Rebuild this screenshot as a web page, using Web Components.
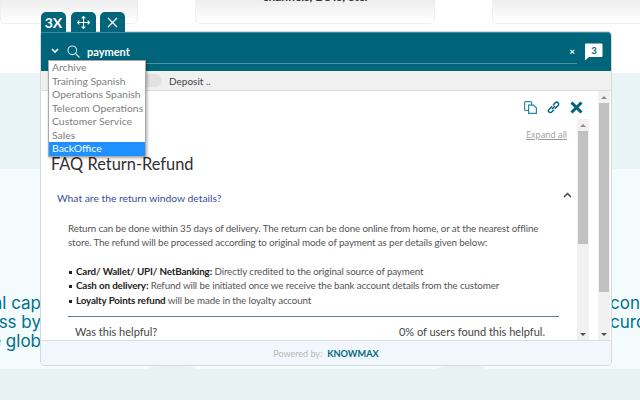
<!DOCTYPE html>
<html>
<head>
<meta charset="utf-8">
<style>
  html, body { margin: 0; height: 400px; overflow: hidden; background: #fff; }
  body { font-family: "Lato", "Noto Sans", sans-serif; }
</style>
</head>
<body>
<bg-page></bg-page>
<kb-widget></kb-widget>

<script>
// fundo do site, atras do widget
class BgPage extends HTMLElement {
  constructor() {
    super();
    this.attachShadow({ mode: "open" });
    this.shadowRoot.innerHTML = `
      <style>
        :host { display: flex; flex-direction: column; width: 640px; height: 400px; overflow: hidden; }
        .cards { height: 73px; flex: none; display: grid; grid-template-columns: 138px 240px 147px; justify-content: start; column-gap: 57px; background: #fff; }
        .card { height: 24px; border: 1px solid #efefef; border-top: 0; border-radius: 0 0 5px 5px; background: linear-gradient(#eeeeee, #fff); font: 700 12px "Lato", sans-serif; color: #333; text-align: center; overflow: hidden; box-sizing: border-box; }
        .card span { display: block; margin-top: -10px; line-height: 14px; }
        .card.last { width: 200px; }
        .band { height: 96px; flex: none; background: #e9f4f6; }
        .mid { height: 200px; flex: none; background: #f3fbfd; display: flex; justify-content: space-between; padding-top: 125px; box-sizing: border-box; color: #00708a; font: 400 17px/19px "Inter", sans-serif; }
        .mid div { width: 41px; overflow: hidden; white-space: nowrap; }
        .mid .l { text-align: right; direction: rtl; }
        .mid .r { width: 30px; }
        .foot { flex: 1; background: #e8f2f2; position: relative; }
        .foot i { position: absolute; top: -4px; width: 48px; height: 4px; background: #e8f2f2; border-radius: 24px 24px 0 0 / 4px 4px 0 0; }
      </style>
      <div class="cards">
        <div class="card"></div>
        <div class="card"><span>channels, DSTs, etc.</span></div>
        <div class="card last"></div>
      </div>
      <div class="band"></div>
      <div class="mid">
        <div class="l"><bdo dir="ltr">al cap</bdo><br><bdo dir="ltr">ss by</bdo><br><bdo dir="ltr">e glob</bdo></div>
        <div class="r">cont<br>curo</div>
      </div>
      <div class="foot"><i style="left:148px"></i><i style="left:437px"></i></div>`;
  }
}

// barra de rolagem desenhada, igual a do windows
class FakeScroll extends HTMLElement {
  constructor() {
    super();
    this.attachShadow({ mode: "open" });
    this.shadowRoot.innerHTML = `
      <style>
        :host { display: flex; flex-direction: column; width: 12px; background: #f1f1f1; align-items: stretch; }
        .btn { height: 12px; flex: none; display: flex; align-items: center; justify-content: center; }
        .up { width: 0; height: 0; border: 3px solid transparent; border-top: 0; border-bottom: 3px solid #8c8c8c; }
        .down { width: 0; height: 0; border: 3px solid transparent; border-bottom: 0; border-top: 3px solid #505050; }
        .track { flex: 1; padding: 0 1px; display: flex; align-items: flex-start; }
        .thumb { flex: 1; background: #c1c1c1; height: var(--thumb, 100px); }
      </style>
      <div class="btn"><div class="up"></div></div>
      <div class="track"><div class="thumb"></div></div>
      <div class="btn"><div class="down"></div></div>`;
  }
}

class KbTab extends HTMLElement {
  constructor() {
    super();
    this.attachShadow({ mode: "open" });
    this.shadowRoot.innerHTML = `
      <style>
        :host { display: flex; width: 25px; height: 20px; align-items: center; justify-content: center; background: #00647a; border-radius: 5px 5px 0 0; color: #fff; font: 700 14px "Lato", sans-serif; }
      </style>
      <slot></slot>`;
  }
}

class KbDropdown extends HTMLElement {
  constructor() {
    super();
    this.attachShadow({ mode: "open" });
    const items = ["Archive", "Training Spanish", "Operations Spanish", "Telecom Operations", "Customer Service", "Sales", "BackOffice"];
    this.shadowRoot.innerHTML = `
      <style>
        :host { display: block; position: absolute; left: 7px; top: 28px; width: 96px; background: #fff; border: 1px solid #a9a9a9; box-shadow: 1px 1px 3px rgba(0,0,0,.35); z-index: 5; font: 400 10.4px/13.5px "Lato", sans-serif; color: #808080; }
        div { padding-left: 3px; height: 13.5px; white-space: nowrap; }
        div.sel { background: #1e90ff; color: #fff; }
      </style>
      ${items.map((t) => `<div class="${t === "BackOffice" ? "sel" : ""}">${t}</div>`).join("")}`;
  }
}

class KbFaq extends HTMLElement {
  constructor() {
    super();
    this.attachShadow({ mode: "open" });
    this.shadowRoot.innerHTML = `
      <style>
        :host { display: flex; flex: 1; min-width: 0; height: 249px; overflow: hidden; background: #fff; font-family: "Lato", sans-serif; }
        .main { flex: 1; min-width: 0; display: flex; flex-direction: column; }
        .tools { height: 28px; flex: none; display: flex; justify-content: flex-end; align-items: flex-start; gap: 10px; padding: 10px 15px 0 0; box-sizing: border-box; }
        .tools svg { display: block; }
        .body { display: flex; flex: 1; min-height: 0; }
        .col { flex: 1; min-width: 0; padding-left: 10px; }
        .expand { text-align: right; font: 400 8.5px/12px "Open Sans", sans-serif; color: #9a9a9a; text-decoration: underline; padding: 10px 10px 0 0; }
        h1 { margin: 11px 0 0; font: 400 16.4px/24px "Lato", sans-serif; color: #2f2f2f; }
        .q { display: flex; justify-content: space-between; align-items: center; margin-top: 12px; height: 20px; padding: 0 5px 0 6px; font: 400 10.3px/20px "Lato", sans-serif; color: #34509c; }
        .q svg { margin-top: -6px; }
        .a { margin: 12.5px 0 0 17px; width: 492px; font-size: 9.8px; letter-spacing: -.13px; line-height: 14.4px; color: #555; }
        .a p { margin: 0 0 14.4px; }
        .a b { color: #222; font-weight: 700; }
        .a ul { margin: 0; padding: 0; list-style: none; }
        .a li::before { content: ""; display: inline-block; width: 3px; height: 3px; background: #222; margin: 0 4px 1px 1px; }
        .help { margin-top: 9px; width: 491px; margin-left: 17px; border-top: 1px solid #5f79b0; display: flex; justify-content: space-between; padding: 7px 14px 0 7px; box-sizing: border-box; font: 400 11px/16px "Lato", sans-serif; color: #444; }
        fake-scroll.in { --thumb: 113px; height: 221px; margin-right: 9px; }
        fake-scroll.out { --thumb: 189px; margin-right: 1px; }
      </style>
      <div class="main">
        <div class="tools">
          <svg width="13" height="13" viewBox="0 0 13 13" fill="none" stroke="#2a88a0" stroke-width="1.2"><path d="M4.5 9.5H1.6a1 1 0 0 1-1-1V1.6a1 1 0 0 1 1-1h5a1 1 0 0 1 1 1V4"/><path d="M4.6 4.2h5l2.8 2.6v5.6H4.6z"/></svg>
          <svg width="13" height="13" viewBox="0 0 13 13" fill="none" stroke="#00647a" stroke-width="1.4"><path d="M5 8l3-3M5.2 5.2L2 8.4a1.9 1.9 0 0 0 2.7 2.7L7 8.8"/><path d="M6 4.2l2.3-2.4a1.9 1.9 0 0 1 2.8 2.7L7.8 7.8"/></svg>
          <svg width="13" height="13" viewBox="0 0 13 13" fill="none" stroke="#00647a" stroke-width="3"><path d="M1.5 1.5l10 10M11.5 1.5l-10 10"/></svg>
        </div>
        <div class="body">
          <div class="col">
            <div class="expand">Expand all</div>
            <h1>FAQ Return-Refund</h1>
            <div class="q"><span>What are the return window details?</span>
              <svg width="9" height="6" viewBox="0 0 9 6" fill="none" stroke="#444" stroke-width="1.5"><path d="M1 5l3.5-3.5L8 5"/></svg>
            </div>
            <div class="a">
              <p>Return can be done within 35 days of delivery. The return can be done online from home, or at the nearest offline store. The refund will be processed according to original mode of payment as per details given below:</p>
              <ul>
                <li><b>Card/ Wallet/ UPI/ NetBanking:</b> Directly credited to the original source of payment</li>
                <li><b>Cash on delivery:</b> Refund will be initiated once we receive the bank account details from the customer</li>
                <li><b>Loyalty Points refund</b> will be made in the loyalty account</li>
              </ul>
            </div>
            <div class="help"><span>Was this helpful?</span><span>0% of users found this helpful.</span></div>
          </div>
          <fake-scroll class="in"></fake-scroll>
        </div>
      </div>
      <fake-scroll class="out"></fake-scroll>`;
  }
}

class KbWidget extends HTMLElement {
  constructor() {
    super();
    this.attachShadow({ mode: "open" });
    this.shadowRoot.innerHTML = `
      <style>
        :host { display: block; position: absolute; left: 41px; top: 13px; width: 570px; }
        .tabs { display: flex; height: 19px; align-items: flex-end; position: relative; z-index: 2; }
        kb-tab + kb-tab { margin-left: 5px; }
        kb-tab:last-child { margin-left: 4px; }
        .win { position: relative; border-radius: 4px; box-shadow: 0 0 0 1px #d5dadd; background: #fff; }
        .head { height: 39px; background: #00647a; border-radius: 0 4px 0 0; display: flex; align-items: flex-start; padding: 10px 8px 0 10px; box-sizing: border-box; color: #fff; box-shadow: inset 0 1px 0 #3f8b9c; }
        .search { display: flex; align-items: center; gap: 8px; flex: 1; height: 18px; border-bottom: 1px solid #4d93a3; margin-right: 7px; padding-bottom: 3px; }
        .search b { font: 700 11px "Lato", sans-serif; flex: 1; margin-left: -1px; }
        .x { font: 700 10px "Lato", sans-serif; margin-right: 2px; }
        .tabsbar { height: 20px; background: #f0f0f0; border-bottom: 1px solid #ddd; box-sizing: border-box; display: flex; align-items: center; font: 400 10px "Lato", sans-serif; color: #444; }
        .pill { width: 52px; height: 13px; margin-left: 69px; background: #e2e2e2; border-radius: 0 7px 7px 0; margin-right: 7px; }
        .foot { height: 25px; background: #f2f7fd; border-top: 1px solid #ddd; border-radius: 0 0 4px 4px; box-sizing: border-box; display: flex; justify-content: center; align-items: center; gap: 5px; font: 400 9px "Lato", sans-serif; color: #b9b9b9; }
        .foot b { color: #006a80; font: 700 9.2px "Lato", sans-serif; }
      </style>
      <div class="tabs">
        <kb-tab>3X</kb-tab>
        <kb-tab><svg width="13" height="13" viewBox="0 0 13 13" fill="none" stroke="#fff" stroke-width="1.1"><path d="M6.5 .5v12M.5 6.5h12M4.7 2.3L6.5.5l1.8 1.8M4.7 10.7l1.8 1.8 1.8-1.8M2.3 4.7L.5 6.5l1.8 1.8M10.7 4.7l1.8 1.8-1.8 1.8"/></svg></kb-tab>
        <kb-tab><svg width="11" height="11" viewBox="0 0 11 11" fill="none" stroke="#fff" stroke-width="1.3"><path d="M1 1l9 9M10 1l-9 9"/></svg></kb-tab>
      </div>
      <div class="win">
        <div class="head">
          <svg style="margin:6px 8px 0 0" width="8" height="6" viewBox="0 0 8 6" fill="none" stroke="#fff" stroke-width="1.6"><path d="M1 1l3 3 3-3"/></svg>
          <div class="search">
            <svg width="13" height="13" viewBox="0 0 13 13" fill="none" stroke="#d5e6ea" stroke-width="1.1"><circle cx="5.3" cy="5.3" r="4.3"/><path d="M8.5 8.5l4 4"/></svg>
            <b>payment</b>
            <span class="x">×</span>
          </div>
          <svg width="19" height="18" viewBox="0 0 19 18" style="margin-top:1px"><path d="M1 1.5a1 1 0 0 1 1-1h15.5a1 1 0 0 1 1 1V13a1 1 0 0 1-1 1H5l-4 3.5z" fill="#fff"/><text x="10" y="11" text-anchor="middle" font-family="Lato, sans-serif" font-size="9.5" font-weight="700" fill="#00647a">3</text></svg>
        </div>
        <kb-dropdown></kb-dropdown>
        <div class="tabsbar"><span class="pill"></span><span>Deposit ..</span></div>
        <kb-faq></kb-faq>
        <div class="foot"><span>Powered by:</span><b>KNOWMAX</b></div>
      </div>`;
  }
}

customElements.define("bg-page", BgPage);
customElements.define("fake-scroll", FakeScroll);
customElements.define("kb-tab", KbTab);
customElements.define("kb-dropdown", KbDropdown);
customElements.define("kb-faq", KbFaq);
customElements.define("kb-widget", KbWidget);
</script>
</body>
</html>
